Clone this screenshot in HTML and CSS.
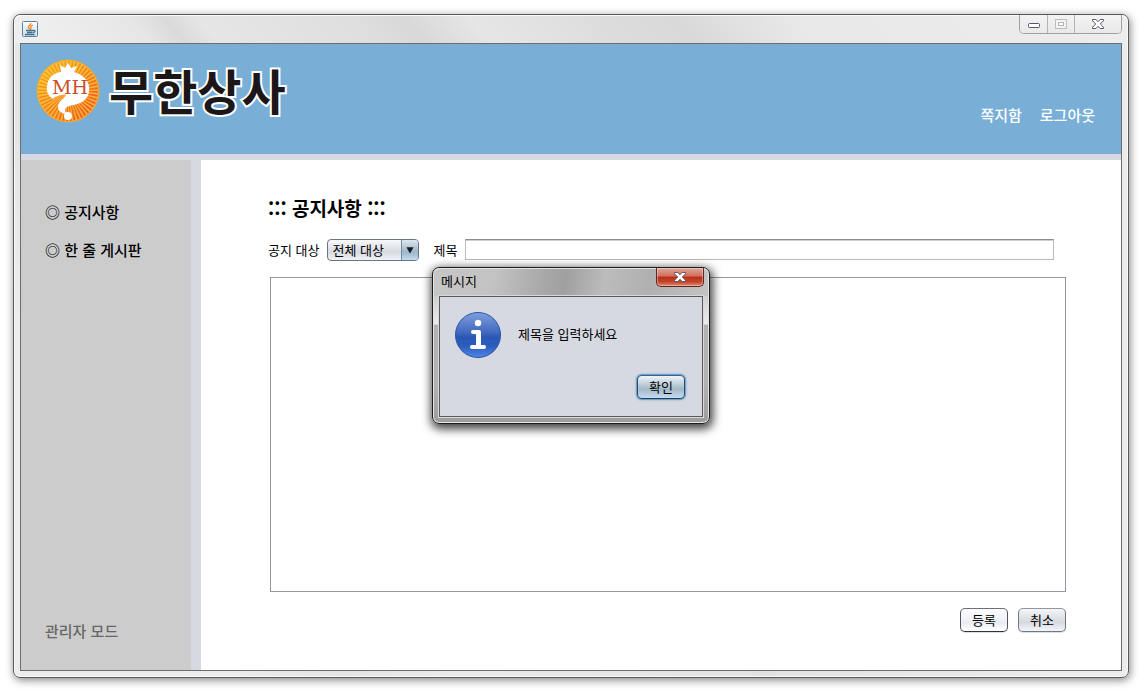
FILE: index.html
```html
<!DOCTYPE html>
<html lang="ko">
<head>
<meta charset="utf-8">
<title>무한상사</title>
<link rel="stylesheet" href="styles.css">
</head>
<body>
<div class="window">
  <div class="titlebar">
    <svg class="app-icon" width="16" height="16" viewBox="0 0 16 16" aria-hidden="true">
      <defs><linearGradient id="tile" x1="0" y1="0" x2="0" y2="1"><stop offset="0" stop-color="#fff"/><stop offset="1" stop-color="#c9dbe7"/></linearGradient></defs>
      <rect x=".5" y=".5" width="15" height="15" rx="1" fill="url(#tile)" stroke="#5b83a3"/>
      <path d="M8.800 2C9.200 4 5.800 4.600 6.400 6.400c.2.800.8 1.200 1 1.800M10.800 4.200c-2 .8-2.800 1.600-2 2.800.5.700 0 1.300-.5 1.700" fill="none" stroke="#f08a24" stroke-width="1.400"/>
      <path d="M4 9.500h7M5 11.500h5.500M3 13.500h9.500M11 9.500c2.600-.6 2.600 1.700 0 2" fill="none" stroke="#42708f" stroke-width="1.300"/>
    </svg>
    <div class="controls">
      <button type="button" class="ctl" aria-label="최소화"><svg width="14" height="10" viewBox="0 0 14 10"><rect x="1.500" y="4.500" width="11" height="4" rx="1" fill="#fff" stroke="#55556b"/></svg></button>
      <button type="button" class="ctl" aria-label="최대화" disabled><svg width="12" height="10" viewBox="0 0 12 10"><rect x=".5" y=".5" width="11" height="9" fill="#f4f4f4" stroke="#bcbcbc"/><rect x="3.500" y="3.500" width="5" height="3" fill="#fff" stroke="#b4b4b4"/></svg></button>
      <button type="button" class="ctl ctl-close" aria-label="닫기"><svg width="12" height="10" viewBox="0 0 12 10"><path d="M.5.5h3.300L6 2.700 8.200.5h3.300v1.300L8.300 5l3.200 3.200v1.300H8.200L6 7.300 3.800 9.500H.5V8.200L3.700 5 .5 1.800z" fill="#fff" stroke="#55556b"/></svg></button>
    </div>
  </div>
  <div class="client">
    <header class="header">
      <a class="brand" href="#">
        <svg class="emblem" width="64" height="64" viewBox="0 0 64 64" aria-hidden="true">
          <defs>
            <linearGradient id="sun" x1="0" y1="0" x2="1" y2="1"><stop offset="0" stop-color="#fbd22e"/><stop offset="1" stop-color="#f9a03c"/></linearGradient>
            <linearGradient id="ray" gradientUnits="userSpaceOnUse" x1="5" y1="5" x2="50" y2="60"><stop offset="0" stop-color="#f7a824"/><stop offset="1" stop-color="#ec5a1a"/></linearGradient>
          </defs>
          <circle cx="32" cy="32" r="31" fill="url(#sun)"/>
          <circle cx="32" cy="32" r="15" fill="none" stroke="url(#ray)" stroke-width="30" pathLength="96" stroke-dasharray="1 1"/>
          <circle cx="32" cy="32" r="31" fill="none" stroke="#efa43a"/>
          <path d="M25 13l-1-7 5 3 3-5 3 5 6-2-3 6c7 2 14 7 15 14 1 8-2 13-7 16-5 3-11 3-15 5-3 2-2 5 0 7-5 0-9-3-9-7s3-7 6-9c-4-1-8 1-11 1-5-3-7-8-6-13 1-8 6-13 14-14z" fill="#fff"/>
          <path d="M13 46c2-7 8-10 17-10.500-1 4-4 4-7 5.500-4 1-7 2-10 5z" fill="#f7a334"/>
          <circle cx="32" cy="57" r="4" fill="#fff"/>
          <text class="emblem-text" x="34" y="35" text-anchor="middle">MH</text>
        </svg>
        <span class="brand-name">무한상사</span>
      </a>
      <nav class="user-nav"><a href="#">쪽지함</a><a href="#">로그아웃</a></nav>
    </header>
    <div class="body">
      <nav class="sidebar">
        <a href="#">◎ 공지사항</a>
        <a href="#">◎ 한 줄 게시판</a>
        <a class="admin" href="#">관리자 모드</a>
      </nav>
      <main class="main">
        <h1>::: 공지사항 :::</h1>
        <div class="fields">
          <label for="target">공지 대상</label>
          <span class="combo">
            <select id="target"><option>전체 대상</option></select>
            <svg class="combo-arrow" width="18" height="20" viewBox="0 0 18 20" aria-hidden="true"><path d="M5 7h8l-4 7z" fill="#16191c"/></svg>
          </span>
          <label for="subject">제목</label>
          <input id="subject" type="text">
        </div>
        <textarea class="content" aria-label="내용"></textarea>
        <div class="actions">
          <button type="button" class="btn btn-light">등록</button>
          <button type="button" class="btn">취소</button>
        </div>
      </main>
    </div>
  </div>
  <div class="dialog" role="dialog" aria-labelledby="dialog-title">
    <div class="dialog-bar">
      <span id="dialog-title">메시지</span>
      <button type="button" class="dialog-close" aria-label="닫기"><svg width="12" height="10" viewBox="0 0 12 10"><path d="M.5.5h3.300L6 2.700 8.200.5h3.300v1.300L8.300 5l3.200 3.200v1.300H8.200L6 7.300 3.800 9.500H.5V8.200L3.700 5 .5 1.800z" fill="#fff" stroke="#5d5563"/></svg></button>
    </div>
    <div class="dialog-body">
      <div class="message">
        <svg width="46" height="46" viewBox="0 0 46 46" aria-hidden="true">
          <defs>
            <linearGradient id="info" x1="0" y1="0" x2="0" y2="1"><stop offset="0" stop-color="#7f9fdd"/><stop offset=".45" stop-color="#4068bd"/><stop offset=".55" stop-color="#2a57b4"/><stop offset=".75" stop-color="#2c5dbd"/><stop offset="1" stop-color="#5288e8"/></linearGradient>
          </defs>
          <circle cx="23" cy="23" r="22.500" fill="url(#info)" stroke="#2852a8"/>
          <circle cx="23" cy="11" r="3.200" fill="#fff"/>
          <path d="M18 18h6q2 0 2 2v13h3q2 0 2 2t-2 2H17q-2 0-2-2t2-2h4V22h-3q-2 0-2-2t2-2z" fill="#fff"/>
        </svg>
        <p>제목을 입력하세요</p>
      </div>
      <button type="button" class="btn btn-default">확인</button>
    </div>
  </div>
</div>
</body>
</html>
```

FILE: styles.css
```css
* { box-sizing: border-box; }

body {
  margin: 0;
  height: 100vh;
  padding: 14px 17px 16px 13px;
  background: #fff;
  color: #000;
  font: 13px/20px "Noto Sans CJK KR", sans-serif;
}

a { color: inherit; text-decoration: none; }
button, input, select, textarea { margin: 0; font: inherit; color: inherit; }
button { padding: 0; }
svg { display: block; }

.window {
  position: relative;
  display: flex;
  flex-direction: column;
  height: 100%;
  min-height: 420px;
  padding: 0 6px;
  border: 1px solid #5a5a5a;
  border-radius: 7px;
  background: linear-gradient(60deg, #ededed 0 14%, #e4e4e4 22%, #ebebeb 30%, #e2e2e2 50%, #ececec 70%, #ebebeb);
  box-shadow: inset 0 0 0 1px #fafafa, 1px 2px 8px rgba(0, 0, 0, .5);
}

.titlebar {
  display: flex;
  justify-content: space-between;
  align-items: flex-start;
  height: 28px;
  flex: none;
  margin: 0 -5px;
  padding: 0 5px 0 6px;
  border-radius: 6px 6px 0 0;
  background: linear-gradient(50deg, #eee 0 4%, #e6e6e6 12%, #dadada 15%, #e6e6e6 18%, #dedede 32%, #d8d8d8 36%, #e6e6e6 42%, #dcdcdc 54%, #d9d9d9 60%, #e8e8e8 70%, #ededed);
  box-shadow: inset 0 1px #fafafa;
}
.app-icon { margin: 6px 0 0 1px; }

.controls {
  display: flex;
  height: 19px;
  border: 1px solid #a0a0a0;
  border-top: 0;
  border-radius: 0 0 5px 5px;
  overflow: hidden;
}
.ctl {
  display: flex;
  justify-content: center;
  align-items: center;
  width: 27px;
  border: 0;
  border-right: 1px solid #b4b4b4;
  background: linear-gradient(#f3f3f3, #e9e9e9);
}
.controls .ctl:first-child { width: 28px; }
.controls .ctl-close { width: 46px; border-right: 0; }

.client {
  display: flex;
  flex-direction: column;
  flex: 1;
  min-height: 0;
  margin-bottom: 6px;
  border: 1px solid #6d6d6d;
  background: #d6d9e1;
}

.header {
  display: flex;
  justify-content: space-between;
  align-items: flex-start;
  flex: none;
  height: 110px;
  padding: 15px 26px 0 15px;
  background: #79afd7;
}
.brand { display: flex; align-items: center; gap: 9px; }
.emblem-text { font: 19px "DejaVu Serif", serif; fill: #c9502a; }
.brand-name {
  padding-bottom: 4px;
  color: #1b1718;
  font-size: 48px;
  font-weight: 700;
  line-height: 60px;
  -webkit-text-stroke: 4px #fff;
  paint-order: stroke fill;
}
.user-nav {
  display: flex;
  gap: 18px;
  padding-top: 46px;
  color: #fff;
  font-size: 15px;
  font-weight: 500;
}

.body {
  display: flex;
  flex: 1;
  gap: 10px;
  min-height: 0;
  padding-top: 6px;
}
.sidebar {
  display: flex;
  flex-direction: column;
  gap: 18px;
  flex: none;
  width: 170px;
  padding: 42px 24px 29px;
  background: #ccc;
  font-size: 15px;
  font-weight: 500;
}
.admin { margin-top: auto; color: #666; }

.main {
  display: flex;
  flex-direction: column;
  flex: 1;
  min-width: 0;
  padding: 34px 55px 38px 67px;
  background: #fff;
}
h1 {
  margin: 0 0 17px;
  font-size: 19px;
  line-height: 28px;
  font-weight: 700;
}
.fields { display: flex; align-items: center; height: 22px; margin-right: 12px; }
.combo { position: relative; margin: 0 14px 0 8px; }
.combo select {
  display: block;
  appearance: none;
  width: 92px;
  height: 22px;
  padding: 0 22px 0 4px;
  border: 1px solid #697484;
  border-radius: 4px;
  background: linear-gradient(#f8f9fb, #dcdfe5 50%, #d6d9df 60%, #f0f3f8);
  line-height: 20px;
}
.combo-arrow {
  position: absolute;
  top: 1px;
  right: 1px;
  width: 17px;
  border-left: 1px solid #6d8ca8;
  border-radius: 0 3px 3px 0;
  background: linear-gradient(#dce7f0, #a8bccd 50%, #9fb5c8 60%, #c4dcf0);
  pointer-events: none;
}
#subject {
  flex: 1;
  align-self: flex-start;
  min-width: 0;
  height: 21px;
  margin-left: 8px;
  padding: 0 5px;
  border: 1px solid #b9b9b9;
  border-top-color: #8d8d8d;
  background: #fff;
  box-shadow: inset 0 1px #d0d0d0;
}
.content {
  flex: 1;
  min-height: 80px;
  margin: 16px 0 16px 2px;
  padding: 5px;
  border: 1px solid #9297a1;
  background: #fff;
  resize: none;
}
.actions { display: flex; justify-content: flex-end; gap: 10px; }

.btn {
  width: 48px;
  height: 24px;
  border: 1px solid #6f7683;
  border-top-color: #9298a2;
  border-radius: 5px;
  background: linear-gradient(#f5f6f8, #dcdfe5 45%, #d6d9df 60%, #f4f6fb);
  box-shadow: 0 1px rgba(0, 0, 0, .12);
  line-height: 20px;
}
.btn-light {
  border-color: #6b717c #4f5561 #2f333b;
  background: linear-gradient(#fdfdfe, #eff1f6 50%, #e8ebf1 60%, #fff);
}
.btn-default {
  border-color: #3d6186 #2f4b68 #263c54;
  background: linear-gradient(#f0f4f7, #b6c8d5 45%, #a3b8c8 60%, #c6dcee);
  box-shadow: 0 0 0 1px #6ca3d2, 0 0 2px 1px #6ca3d2;
}

.dialog {
  position: absolute;
  inset: 0 0 2px;
  display: flex;
  flex-direction: column;
  width: 278px;
  height: 157px;
  margin: auto;
  padding: 0 6px 6px;
  border: 1px solid #1d1d1d;
  border-radius: 7px;
  background: linear-gradient(#b3b3b3 0, #c9c9c9 15%, #ececec 36%, #b2b2b2 37%, #b2b2b2 75%, #9c9c9c);
  box-shadow: inset 0 0 0 1px #e4e4e4, 1px 3px 10px 2px rgba(0, 0, 0, .75);
}
.dialog-bar {
  display: flex;
  justify-content: space-between;
  align-items: flex-start;
  height: 28px;
  flex: none;
  margin: 0 -5px;
  padding: 0 4px 0 7px;
  border-radius: 6px 6px 0 0;
  background: linear-gradient(100deg, #c6c6c6 0, #c3c3c3 22%, #a8a8a8 40%, #a0a0a0 48%, #bcbcbc 62%, #b0b0b0 78%, #c4c4c4);
  box-shadow: inset 0 1px #e4e4e4;
}
.dialog-bar span { padding-top: 3px; }
.dialog-close {
  display: flex;
  justify-content: center;
  align-items: center;
  width: 48px;
  height: 19px;
  border: 1px solid #5b2723;
  border-top: 0;
  border-radius: 0 0 5px 5px;
  background: linear-gradient(#e3a598, #d06f5c 45%, #b9301a 50%, #c4412a 75%, #e08a68);
  box-shadow: inset 0 0 0 1px rgba(255, 255, 255, .35);
}
.dialog-body {
  display: flex;
  flex-direction: column;
  justify-content: space-between;
  flex: 1;
  padding: 15px 17px 17px 15px;
  border: 1px solid #5a5a5a;
  background: #d6d9e1;
  box-shadow: 0 0 0 1px #d8d8d8;
}
.message { display: flex; align-items: center; gap: 17px; }
.message p { margin: 0; padding-bottom: 2px; }
.dialog-body .btn { align-self: flex-end; }
```
